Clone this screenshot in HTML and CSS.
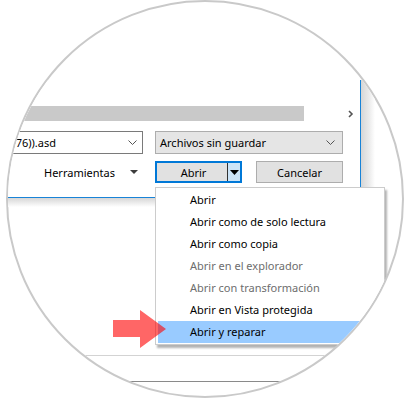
FILE: index.html
```html
<!DOCTYPE html>
<html lang="es">
  <head>
    <meta charset="UTF-8" />
    <meta name="viewport" content="width=device-width, initial-scale=1.0" />
    <title>Abrir y reparar</title>
    <link rel="stylesheet" href="styles.css">
  </head>
  <body>
    <div class="lens">
      <div class="scene">
        <div class="window">
          <div class="dialog">
            <div class="pathRow">
              <div class="pathBar"></div>
              <svg class="next" width="6" height="8" viewBox="0 0 6 8">
                <polyline points="1,1 4,4 1,7" fill="none" stroke="#555" stroke-width="1.6" />
              </svg>
            </div>
            <div class="fields">
              <div class="fname">
                <div class="fnameText"><span>76)).asd</span></div>
                <svg class="chev" width="9" height="5" viewBox="0 0 9 5">
                  <polyline points="0.5,0.5 4.5,4.5 8.5,0.5" fill="none" stroke="#555" stroke-width="1" />
                </svg>
              </div>
              <div class="combo">
                <span>Archivos sin guardar</span>
                <svg class="chev" width="9" height="5" viewBox="0 0 9 5">
                  <polyline points="0.5,0.5 4.5,4.5 8.5,0.5" fill="none" stroke="#555" stroke-width="1" />
                </svg>
              </div>

              <div class="tools">
                <span>Herramientas</span>
                <svg class="tri" width="8" height="4" viewBox="0 0 8 4">
                  <polygon points="0,0 8,0 4,4" fill="#3c3c3c" />
                </svg>
              </div>
              <div class="split">
                <div class="splitMain">Abrir</div>
                <div class="splitArrow">
                  <svg width="9" height="5" viewBox="0 0 9 5">
                    <polygon points="0,0 9,0 4.5,5" fill="#000" />
                  </svg>
                </div>
              </div>
              <div class="gap"></div>
              <div class="btn">Cancelar</div>
            </div>
          </div>
          <div class="edge"></div>
        </div>
        <div class="shade"></div>
        <div class="backdrop">
          <div class="lineLight"></div>
          <div class="lineDark"></div>
        </div>

        <ul class="menu">
          <li>Abrir</li>
          <li>Abrir como de solo lectura</li>
          <li>Abrir como copia</li>
          <li class="off">Abrir en el explorador</li>
          <li class="off">Abrir con transformación</li>
          <li>Abrir en Vista protegida</li>
          <li class="active">Abrir y reparar</li>
        </ul>

        <svg class="pointer" width="60" height="42" viewBox="0 0 60 42">
          <polygon points="3,12 30,12 30,2 56,21 30,40 30,29 3,29" fill="#ff0000" fill-opacity="0.6" />
        </svg>
      </div>
    </div>
  </body>
</html>
```

FILE: styles.css
```css
* {
  box-sizing: border-box;
}
body {
  margin: 0;
  background: #fff;
  font-family: "Noto Sans", "Open Sans", sans-serif;
  font-size: 11px;
  color: #000;
}
.lens {
  width: 398px;
  height: 398px;
  margin-left: 6px;
  border: 2px solid #c9c9c9;
  border-radius: 50%;
  overflow: hidden;
  background: #fff;
}
.scene {
  position: relative;
  width: 410px;
  height: 398px;
  margin: -2px 0 0 -8px;
  padding-top: 80px;
}
.window {
  display: flex;
}
.dialog {
  width: 361px;
  padding: 26px 0 14px 0;
  border-right: 1px solid #1883d7;
  border-bottom: 1px solid #1883d7;
  background: #fff;
}
.edge {
  width: 14px;
  background: linear-gradient(to right, #d6d6d6, #ececec 60%, #fff);
}
.shade {
  width: 375px;
  height: 9px;
  background: linear-gradient(to bottom, #d6d6d6, #fff);
}

.pathRow {
  display: flex;
  align-items: center;
}
.pathBar {
  width: 304px;
  height: 15px;
  background: #c9c9c9;
}
.next {
  margin-left: 44px;
}

.fields {
  display: grid;
  grid-template-columns: 155px 87px 14px 87px;
  grid-template-rows: 23px 22px;
  row-gap: 7px;
  margin-top: 10px;
}
.fname {
  display: flex;
  align-items: center;
  width: 143px;
  border: 1px solid #7a7a7a;
  border-left: none;
  background: #fff;
}
.fnameText {
  display: flex;
  justify-content: flex-end;
  width: 56px;
  white-space: nowrap;
}
.fname .chev {
  margin-left: auto;
  margin-right: 5px;
}
.combo {
  grid-column: 2 / 5;
  display: flex;
  align-items: center;
  padding-left: 4px;
  border: 1px solid #adadad;
  background: #e5e5e5;
}
.combo .chev {
  margin-left: auto;
  margin-right: 7px;
}

.tools {
  display: flex;
  align-items: center;
  padding-left: 44px;
}
.tools .tri {
  margin-left: 15px;
}
.split {
  display: flex;
  border: 2px solid #0078d7;
  background: #e1e1e1;
}
.splitMain {
  flex: 1;
  display: flex;
  align-items: center;
  justify-content: center;
  padding-left: 3px;
  border-right: 1px solid #333;
}
.splitArrow {
  width: 12px;
  display: flex;
  align-items: center;
  justify-content: center;
  background: #cce4f7;
}
.btn {
  display: flex;
  align-items: center;
  justify-content: center;
  border: 1px solid #adadad;
  background: #e1e1e1;
}

.backdrop {
  padding-top: 148px;
}
.lineLight {
  height: 1px;
  background: #d3d3d3;
}
.lineDark {
  width: 152px;
  height: 1px;
  margin: 25px 0 0 130px;
  background: #8a8a8a;
}

.menu {
  position: absolute;
  left: 155px;
  top: 187px;
  width: 230px;
  margin: 0;
  padding: 1px 1px 1px 2px;
  list-style: none;
  border: 1px solid #cccccc;
  background: #fff;
  box-shadow: 2px 3px 2px rgba(0, 0, 0, 0.3);
}
.menu li {
  height: 22px;
  line-height: 22px;
  padding-left: 32px;
  white-space: nowrap;
}
.menu li.off {
  color: #6d6d6d;
}
.menu li.active {
  background: #99cbff;
}
.pointer {
  position: absolute;
  left: 110px;
  top: 308px;
}
```
